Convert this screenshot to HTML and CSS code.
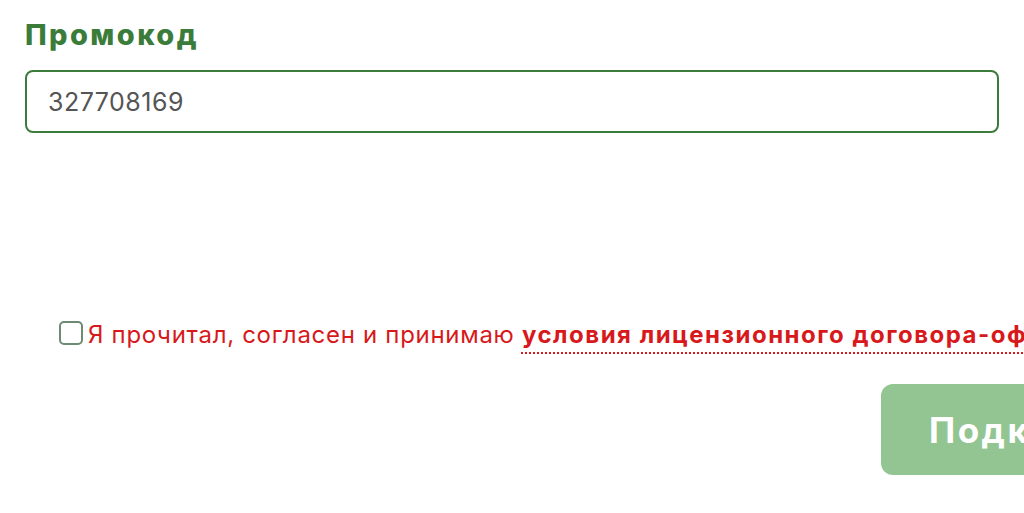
FILE: index.html
```html
<!DOCTYPE html>
<html lang="ru">
  <head>
    <meta charset="UTF-8" />
    <meta name="viewport" content="width=device-width, initial-scale=1.0" />
    <title>Промокод</title>
    <link rel="stylesheet" href="styles.css">
  </head>
  <body>
    <div class="form">
      <label class="field-label" for="promo">Промокод</label>
      <input class="field-input" id="promo" type="text" value="327708169" />

      <label class="agree">
        <input class="agree-box" type="checkbox" />
        <span class="agree-text">Я прочитал, согласен и принимаю <a class="agree-link" href="#">условия лицензионного договора-оферты</a></span>
      </label>

      <div class="actions">
        <button class="submit-btn" type="button">Подключить</button>
      </div>
    </div>
  </body>
</html>
```

FILE: styles.css
```css
:root {
  --green: #3b7c3b;
  --green-light: #93c593;
  --red: #d7191c;
  --text-gray: #555;
}

* {
  margin: 0;
  padding: 0;
  box-sizing: border-box;
}

html,
body {
  height: 100%;
  overflow: hidden;
}

body {
  background: #fff;
  font-family: "Inter", "Noto Sans", sans-serif;
}

.form {
  display: flex;
  flex-direction: column;
  padding: 15px 25px 0 25px;
}

.field-label {
  font-size: 29px;
  font-weight: 800;
  color: var(--green);
  line-height: 40px;
  letter-spacing: 2.4px;
}

.field-input {
  margin-top: 15px;
  height: 63px;
  width: 100%;
  border: 2px solid var(--green);
  border-radius: 8px;
  padding: 0 21px;
  font-family: inherit;
  font-size: 25px;
  letter-spacing: 0.5px;
  color: var(--text-gray);
  outline: none;
}

.agree {
  margin-top: 187px;
  margin-left: 34px;
  display: flex;
  align-items: center;
  gap: 5px;
  white-space: nowrap;
}

.agree-box {
  appearance: none;
  width: 24px;
  height: 24px;
  flex-shrink: 0;
  border: 2px solid #6d8a72;
  border-radius: 5px;
  background: #fff;
  margin-top: -4px;
}

.agree-text {
  font-size: 24px;
  letter-spacing: 0.7px;
  color: var(--red);
  line-height: 30px;
}

.agree-link {
  color: var(--red);
  font-weight: 700;
  letter-spacing: 1.5px;
  text-decoration: underline dotted;
  text-underline-offset: 9px;
  text-decoration-thickness: 2px;
}

.actions {
  margin-top: 34px;
  display: flex;
}

.submit-btn {
  margin-left: 856px;
  flex-shrink: 0;
  height: 91px;
  padding: 0 48px;
  border: none;
  border-radius: 12px;
  background: var(--green-light);
  color: #fff;
  font-family: inherit;
  font-size: 35px;
  font-weight: 700;
  letter-spacing: 2.5px;
  cursor: pointer;
}
```
